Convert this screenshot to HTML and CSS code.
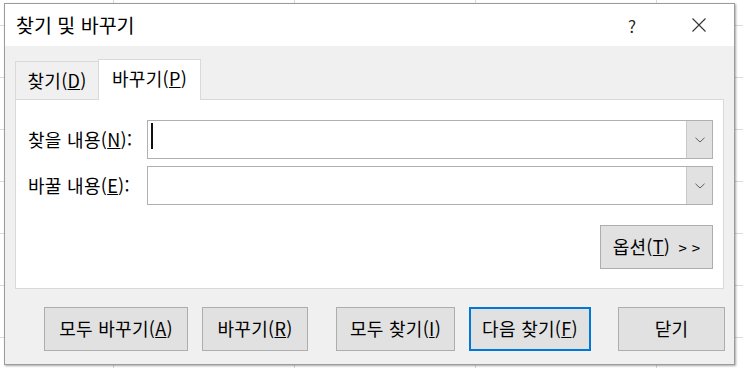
FILE: index.html
```html
<!DOCTYPE html>
<html lang="ko">

<head>
    <title>찾기 및 바꾸기</title>
    <link rel="stylesheet" href="styles.css">
</head>

<body>
    <div class="dialog">
        <div class="titlebar">
            <span class="title">찾기 및 바꾸기</span>
            <span class="help">?</span>
            <span class="close">
                <svg width="14" height="14" viewBox="0 0 14 14">
                    <path d="M0.5 0.5 L13.5 13.5 M13.5 0.5 L0.5 13.5" stroke="#333" stroke-width="1.1" fill="none" />
                </svg>
            </span>
        </div>
        <div class="tabs">
            <div class="tab">찾기(<u>D</u>)</div>
            <div class="tab active">바꾸기(<u>P</u>)</div>
        </div>
        <div class="panel">
            <div class="field-row">
                <label>찾을 내용(<u>N</u>):</label>
                <div class="combo">
                    <div class="combo-text"><span class="caret"></span></div>
                    <div class="combo-drop">
                        <svg width="10" height="6" viewBox="0 0 10 6">
                            <path d="M0.5 0.8 L5 5 L9.5 0.8" stroke="#606060" stroke-width="1" fill="none" />
                        </svg>
                    </div>
                </div>
            </div>
            <div class="field-row">
                <label>바꿀 내용(<u>E</u>):</label>
                <div class="combo">
                    <div class="combo-text"></div>
                    <div class="combo-drop">
                        <svg width="10" height="6" viewBox="0 0 10 6">
                            <path d="M0.5 0.8 L5 5 L9.5 0.8" stroke="#606060" stroke-width="1" fill="none" />
                        </svg>
                    </div>
                </div>
            </div>
            <div class="options">
                <button class="btn btn-options">옵션(<u>T</u>) <span class="arrows">&gt; &gt;</span></button>
            </div>
        </div>
        <div class="buttons">
            <button class="btn w-replace-all">모두 바꾸기(<u>A</u>)</button>
            <button class="btn w-replace">바꾸기(<u>R</u>)</button>
            <button class="btn w-find-all">모두 찾기(<u>I</u>)</button>
            <button class="btn btn-default w-find-next">다음 찾기(<u>F</u>)</button>
            <button class="btn w-close">닫기</button>
        </div>
    </div>
</body>

</html>
```

FILE: styles.css
```css
* {
    margin: 0;
    padding: 0;
    box-sizing: border-box;
}

body {
    width: 743px;
    height: 368px;
    overflow: hidden;
    background-color: #ffffff;
    background-image:
        linear-gradient(to bottom, transparent 25px, #dadada 25px, #dadada 26px, transparent 26px),
        linear-gradient(to right, transparent 113px, #dadada 113px, #dadada 114px, transparent 114px);
    background-size: 100% 52px, 181px 100%;
    font-family: "Noto Sans CJK KR", "Noto Sans", sans-serif;
    color: #000000;
}

.dialog {
    width: 731px;
    height: 362px;
    margin: 3px 0 0 4px;
    border: 1px solid #9c9c9c;
    background: #f0f0f0;
    box-shadow: 1px 1px 2px rgba(0, 0, 0, 0.35);
}

.titlebar {
    height: 42px;
    background: #ffffff;
    display: flex;
    align-items: center;
    padding-left: 11px;
}

.title {
    font-size: 19.5px;
    flex: 1;
    padding-bottom: 2px;
}

.help {
    font-size: 17px;
    color: #222;
    width: 20px;
    text-align: center;
    margin-right: 50px;
}

.close {
    width: 14px;
    height: 14px;
    display: flex;
    margin-right: 28px;
}

.tabs {
    display: flex;
    align-items: flex-end;
    margin: 13px 0 0 10px;
}

.tab {
    height: 38px;
    width: 83px;
    border: 1px solid #d9d9d9;
    border-right: none;
    border-bottom: none;
    display: flex;
    align-items: center;
    justify-content: center;
    font-size: 18px;
    letter-spacing: 0.3px;
    padding-bottom: 2px;
}

.tab.active {
    height: 41px;
    width: 103px;
    border-right: 1px solid #d9d9d9;
    background: #ffffff;
    margin-bottom: -1px;
    position: relative;
    z-index: 1;
    padding-bottom: 4px;
}

.panel {
    width: 709px;
    height: 190px;
    margin-left: 10px;
    border: 1px solid #d9d9d9;
    background: #ffffff;
    padding: 20px 10px 0 12px;
    display: flex;
    flex-direction: column;
    gap: 7px;
}

.field-row {
    display: grid;
    grid-template-columns: 119px 1fr;
    align-items: center;
}

label {
    font-size: 18px;
    letter-spacing: 0.3px;
    padding-bottom: 1px;
}

.combo {
    height: 39px;
    display: flex;
    border: 1px solid #b0b0b0;
}

.combo-text {
    flex: 1;
    display: flex;
    align-items: center;
    padding-left: 3px;
}

.caret {
    width: 2px;
    height: 26px;
    background: #111;
    margin-top: -8px;
}

.combo-drop {
    width: 26px;
    border-left: 1px solid #c8c8c8;
    background: #e1e1e1;
    display: flex;
    align-items: center;
    justify-content: center;
}

.options {
    display: flex;
    justify-content: flex-end;
    margin-top: 13px;
}

.btn {
    height: 44px;
    border: 1px solid #adadad;
    background: #e1e1e1;
    font-family: "Noto Sans CJK KR", "Noto Sans", sans-serif;
    font-size: 18px;
    letter-spacing: 0.3px;
    color: #000;
    padding-bottom: 2px;
}

.btn-options {
    width: 113px;
}

.arrows {
    font-size: 15px;
    margin-left: 3px;
}

.btn-default {
    border: 2px solid #0078d7;
}

.buttons {
    display: flex;
    margin-top: 18px;
    padding-left: 39px;
}

.w-replace-all {
    width: 144px;
}

.w-replace {
    width: 106px;
    margin-left: 14px;
}

.w-find-all {
    width: 119px;
    margin-left: 28px;
}

.w-find-next {
    width: 122px;
    margin-left: 14px;
}

.w-close {
    width: 107px;
    margin-left: 27px;
}
```
